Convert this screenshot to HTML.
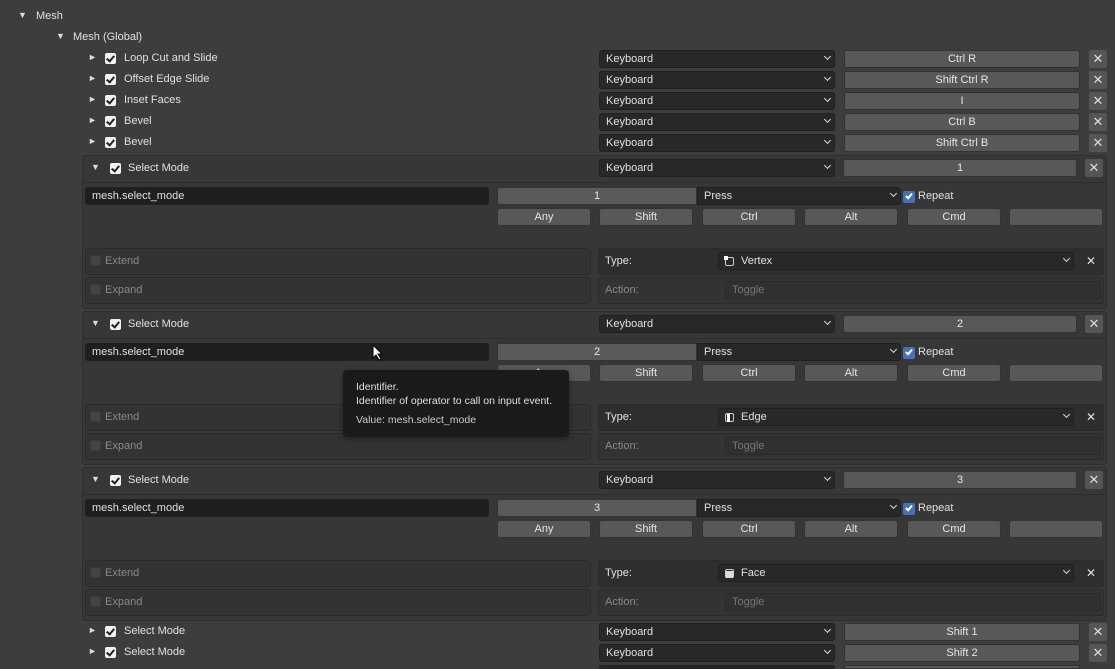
<!DOCTYPE html>
<html style="overflow:hidden;height:669px"><head><style>
*{box-sizing:border-box;margin:0;padding:0}
body{width:1115px;height:669px;background:#3d3d3d;font-family:"Liberation Sans","DejaVu Sans",sans-serif;font-size:11px;color:#e0e0e0;position:relative;overflow:hidden}
.a{position:absolute}
.t{position:absolute;line-height:14px;white-space:nowrap}
.tri{position:absolute;font-size:9px;color:#ddd}
.cb{position:absolute;width:11px;height:11px;background:#f2f2f2;border-radius:2px}
.cb::after{content:"";position:absolute;left:3px;top:1px;width:3px;height:6px;border:solid #222;border-width:0 2px 2px 0;transform:rotate(40deg)}
.dd{position:absolute;height:18px;background:#282828;border:1px solid #202020;border-radius:3px;padding-left:6px;line-height:16px;color:#e0e0e0}
.dd .v{position:absolute;right:4px;top:3px;width:5px;height:5px;border:solid #ddd;border-width:0 1.5px 1.5px 0;transform:rotate(45deg)}
.btn{position:absolute;height:18px;background:#585858;border:1px solid #333;border-radius:3px;text-align:center;line-height:16px;color:#e6e6e6}
.x{position:absolute;width:18px;height:18px;background:#555;border-radius:2px;text-align:center;line-height:17px;font-size:13px;color:#ddd}
.box{position:absolute;left:82px;width:1025px;height:154px;background:#373737;border:1px solid #2e2e2e;border-radius:3px}
.sep{position:absolute;left:0;right:0;height:1px;background:#2c2c2c}
.row{position:absolute;background:#333;border:1px solid #2b2b2b;border-radius:3px}
.dim{color:#8a8a8a}
.ecb{position:absolute;width:11px;height:11px;background:#444;border:1px solid #3a3a3a;border-radius:2px}
</style></head><body>

<div class="tri" style="left:18px;top:10px">▼</div><div class="t" style="left:36px;top:9px">Mesh</div>
<div class="tri" style="left:56px;top:31px">▼</div><div class="t" style="left:73px;top:30px">Mesh (Global)</div>

<div class="tri" style="left:88px;top:52px">►</div><div class="cb" style="left:105px;top:53px"></div><div class="t" style="left:124px;top:51px">Loop Cut and Slide</div>
<div class="dd" style="left:599px;top:50px;width:236px">Keyboard<span class="v"></span></div><div class="btn" style="left:844px;top:50px;width:236px">Ctrl R</div><div class="x" style="left:1089px;top:50px">✕</div>

<div class="tri" style="left:88px;top:73px">►</div><div class="cb" style="left:105px;top:74px"></div><div class="t" style="left:124px;top:72px">Offset Edge Slide</div>
<div class="dd" style="left:599px;top:71px;width:236px">Keyboard<span class="v"></span></div><div class="btn" style="left:844px;top:71px;width:236px">Shift Ctrl R</div><div class="x" style="left:1089px;top:71px">✕</div>

<div class="tri" style="left:88px;top:94px">►</div><div class="cb" style="left:105px;top:95px"></div><div class="t" style="left:124px;top:93px">Inset Faces</div>
<div class="dd" style="left:599px;top:92px;width:236px">Keyboard<span class="v"></span></div><div class="btn" style="left:844px;top:92px;width:236px">I</div><div class="x" style="left:1089px;top:92px">✕</div>

<div class="tri" style="left:88px;top:115px">►</div><div class="cb" style="left:105px;top:116px"></div><div class="t" style="left:124px;top:114px">Bevel</div>
<div class="dd" style="left:599px;top:113px;width:236px">Keyboard<span class="v"></span></div><div class="btn" style="left:844px;top:113px;width:236px">Ctrl B</div><div class="x" style="left:1089px;top:113px">✕</div>

<div class="tri" style="left:88px;top:136px">►</div><div class="cb" style="left:105px;top:137px"></div><div class="t" style="left:124px;top:135px">Bevel</div>
<div class="dd" style="left:599px;top:134px;width:236px">Keyboard<span class="v"></span></div><div class="btn" style="left:844px;top:134px;width:236px">Shift Ctrl B</div><div class="x" style="left:1089px;top:134px">✕</div>

<div class="box" style="top:155px">
 <div class="tri" style="left:8px;top:6px">▼</div><div class="cb" style="left:27px;top:7px"></div><div class="t" style="left:45px;top:5px">Select Mode</div>
 <div class="dd" style="left:516px;top:3px;width:236px">Keyboard<span class="v"></span></div><div class="btn" style="left:760px;top:3px;width:234px">1</div><div class="x" style="left:1002px;top:3px">✕</div>
 <div class="sep" style="top:26px"></div>
 <div class="dd" style="left:2px;top:31px;width:404px;background:#1f1f1f">mesh.select_mode</div>
 <div class="btn" style="left:414px;top:31px;width:200px;background:#5a5a5a;border-radius:3px 0 0 3px">1</div>
 <div class="dd" style="left:614px;top:31px;width:204px;border-radius:0 3px 3px 0">Press<span class="v"></span></div>
 <div class="a" style="left:820px;top:35px;width:12px;height:12px;background:#4772b3;border-radius:2px"></div><div class="a" style="left:824px;top:36px;width:4px;height:7px;border:solid #fff;border-width:0 2px 2px 0;transform:rotate(40deg)"></div>
 <div class="t" style="left:835px;top:33px">Repeat</div>
 <div class="btn" style="left:414px;top:52px;width:94px">Any</div><div class="btn" style="left:516px;top:52px;width:94px">Shift</div><div class="btn" style="left:619px;top:52px;width:94px">Ctrl</div><div class="btn" style="left:721px;top:52px;width:94px">Alt</div><div class="btn" style="left:824px;top:52px;width:94px">Cmd</div><div class="btn" style="left:926px;top:52px;width:94px"></div>
 <div class="row" style="left:2px;top:92px;width:506px;height:27px"></div><div class="ecb" style="left:7px;top:99px"></div><div class="t dim" style="left:22px;top:98px">Extend</div>
 <div class="row" style="left:2px;top:121px;width:506px;height:27px"></div><div class="ecb" style="left:7px;top:128px"></div><div class="t dim" style="left:22px;top:127px">Expand</div>
 <div class="row" style="left:515px;top:92px;width:506px;height:27px;background:#2e2e2e"></div><div class="t" style="left:522px;top:98px">Type:</div>
 <div class="dd" style="left:635px;top:96px;width:356px;padding-left:22px">Vertex<span class="v"></span></div><div class="a" style="left:642px;top:101px;width:9px;height:9px;border:1px solid #ccc;border-radius:2px"></div><div class="a" style="left:641px;top:100px;width:4px;height:4px;background:#fff"></div>
 <div class="t" style="left:1003px;top:98px;font-size:12px">✕</div>
 <div class="row" style="left:515px;top:121px;width:506px;height:27px"></div><div class="t dim" style="left:522px;top:127px">Action:</div>
 <div class="dd" style="left:642px;top:125px;width:376px;background:#303030;border-color:#2a2a2a;color:#777">Toggle</div>
</div>

<div class="box" style="top:311px">
 <div class="tri" style="left:8px;top:6px">▼</div><div class="cb" style="left:27px;top:7px"></div><div class="t" style="left:45px;top:5px">Select Mode</div>
 <div class="dd" style="left:516px;top:3px;width:236px">Keyboard<span class="v"></span></div><div class="btn" style="left:760px;top:3px;width:234px">2</div><div class="x" style="left:1002px;top:3px">✕</div>
 <div class="sep" style="top:26px"></div>
 <div class="dd" style="left:2px;top:31px;width:404px;background:#1f1f1f">mesh.select_mode</div>
 <div class="btn" style="left:414px;top:31px;width:200px;background:#5a5a5a;border-radius:3px 0 0 3px">2</div>
 <div class="dd" style="left:614px;top:31px;width:204px;border-radius:0 3px 3px 0">Press<span class="v"></span></div>
 <div class="a" style="left:820px;top:35px;width:12px;height:12px;background:#4772b3;border-radius:2px"></div><div class="a" style="left:824px;top:36px;width:4px;height:7px;border:solid #fff;border-width:0 2px 2px 0;transform:rotate(40deg)"></div>
 <div class="t" style="left:835px;top:33px">Repeat</div>
 <div class="btn" style="left:414px;top:52px;width:94px">Any</div><div class="btn" style="left:516px;top:52px;width:94px">Shift</div><div class="btn" style="left:619px;top:52px;width:94px">Ctrl</div><div class="btn" style="left:721px;top:52px;width:94px">Alt</div><div class="btn" style="left:824px;top:52px;width:94px">Cmd</div><div class="btn" style="left:926px;top:52px;width:94px"></div>
 <div class="row" style="left:2px;top:92px;width:506px;height:27px"></div><div class="ecb" style="left:7px;top:99px"></div><div class="t dim" style="left:22px;top:98px">Extend</div>
 <div class="row" style="left:2px;top:121px;width:506px;height:27px"></div><div class="ecb" style="left:7px;top:128px"></div><div class="t dim" style="left:22px;top:127px">Expand</div>
 <div class="row" style="left:515px;top:92px;width:506px;height:27px;background:#2e2e2e"></div><div class="t" style="left:522px;top:98px">Type:</div>
 <div class="dd" style="left:635px;top:96px;width:356px;padding-left:22px">Edge<span class="v"></span></div><div class="a" style="left:642px;top:101px;width:9px;height:9px;border:1px solid #ccc;border-radius:2px"></div><div class="a" style="left:644px;top:102px;width:3px;height:8px;background:#fff"></div>
 <div class="t" style="left:1003px;top:98px;font-size:12px">✕</div>
 <div class="row" style="left:515px;top:121px;width:506px;height:27px"></div><div class="t dim" style="left:522px;top:127px">Action:</div>
 <div class="dd" style="left:642px;top:125px;width:376px;background:#303030;border-color:#2a2a2a;color:#777">Toggle</div>
</div>

<div class="box" style="top:467px">
 <div class="tri" style="left:8px;top:6px">▼</div><div class="cb" style="left:27px;top:7px"></div><div class="t" style="left:45px;top:5px">Select Mode</div>
 <div class="dd" style="left:516px;top:3px;width:236px">Keyboard<span class="v"></span></div><div class="btn" style="left:760px;top:3px;width:234px">3</div><div class="x" style="left:1002px;top:3px">✕</div>
 <div class="sep" style="top:26px"></div>
 <div class="dd" style="left:2px;top:31px;width:404px;background:#1f1f1f">mesh.select_mode</div>
 <div class="btn" style="left:414px;top:31px;width:200px;background:#5a5a5a;border-radius:3px 0 0 3px">3</div>
 <div class="dd" style="left:614px;top:31px;width:204px;border-radius:0 3px 3px 0">Press<span class="v"></span></div>
 <div class="a" style="left:820px;top:35px;width:12px;height:12px;background:#4772b3;border-radius:2px"></div><div class="a" style="left:824px;top:36px;width:4px;height:7px;border:solid #fff;border-width:0 2px 2px 0;transform:rotate(40deg)"></div>
 <div class="t" style="left:835px;top:33px">Repeat</div>
 <div class="btn" style="left:414px;top:52px;width:94px">Any</div><div class="btn" style="left:516px;top:52px;width:94px">Shift</div><div class="btn" style="left:619px;top:52px;width:94px">Ctrl</div><div class="btn" style="left:721px;top:52px;width:94px">Alt</div><div class="btn" style="left:824px;top:52px;width:94px">Cmd</div><div class="btn" style="left:926px;top:52px;width:94px"></div>
 <div class="row" style="left:2px;top:92px;width:506px;height:27px"></div><div class="ecb" style="left:7px;top:99px"></div><div class="t dim" style="left:22px;top:98px">Extend</div>
 <div class="row" style="left:2px;top:121px;width:506px;height:27px"></div><div class="ecb" style="left:7px;top:128px"></div><div class="t dim" style="left:22px;top:127px">Expand</div>
 <div class="row" style="left:515px;top:92px;width:506px;height:27px;background:#2e2e2e"></div><div class="t" style="left:522px;top:98px">Type:</div>
 <div class="dd" style="left:635px;top:96px;width:356px;padding-left:22px">Face<span class="v"></span></div><div class="a" style="left:642px;top:101px;width:9px;height:9px;border:1px solid #ccc;border-radius:2px"></div><div class="a" style="left:643px;top:103px;width:7px;height:7px;background:#ddd"></div>
 <div class="t" style="left:1003px;top:98px;font-size:12px">✕</div>
 <div class="row" style="left:515px;top:121px;width:506px;height:27px"></div><div class="t dim" style="left:522px;top:127px">Action:</div>
 <div class="dd" style="left:642px;top:125px;width:376px;background:#303030;border-color:#2a2a2a;color:#777">Toggle</div>
</div>

<div class="tri" style="left:88px;top:625px">►</div><div class="cb" style="left:105px;top:626px"></div><div class="t" style="left:124px;top:624px">Select Mode</div>
<div class="dd" style="left:599px;top:623px;width:236px">Keyboard<span class="v"></span></div><div class="btn" style="left:844px;top:623px;width:236px">Shift 1</div><div class="x" style="left:1089px;top:623px">✕</div>
<div class="tri" style="left:88px;top:646px">►</div><div class="cb" style="left:105px;top:647px"></div><div class="t" style="left:124px;top:645px">Select Mode</div>
<div class="dd" style="left:599px;top:644px;width:236px">Keyboard<span class="v"></span></div><div class="btn" style="left:844px;top:644px;width:236px">Shift 2</div><div class="x" style="left:1089px;top:644px">✕</div>
<div class="dd" style="left:599px;top:665px;width:236px;height:4px"></div><div class="btn" style="left:844px;top:665px;width:236px;height:4px"></div>

<div class="a" style="left:343px;top:370px;width:226px;height:67px;background:#1a1a1a;border-radius:4px;box-shadow:0 2px 6px rgba(0,0,0,.4)"></div>
<div class="t" style="left:356px;top:380px;font-size:10.5px">Identifier.</div>
<div class="t" style="left:356px;top:394px;font-size:10.5px">Identifier of operator to call on input event.</div>
<div class="t" style="left:356px;top:413px;color:#ccc;font-size:10.5px">Value: mesh.select_mode</div>

<svg class="a" style="left:372px;top:344px" width="12" height="17" viewBox="0 0 12 17"><path d="M1 1 L1 14 L4 11 L7 16 L9 15 L6 10 L10 10 Z" fill="#fff" stroke="#000" stroke-width="1"/></svg>
</body></html>
